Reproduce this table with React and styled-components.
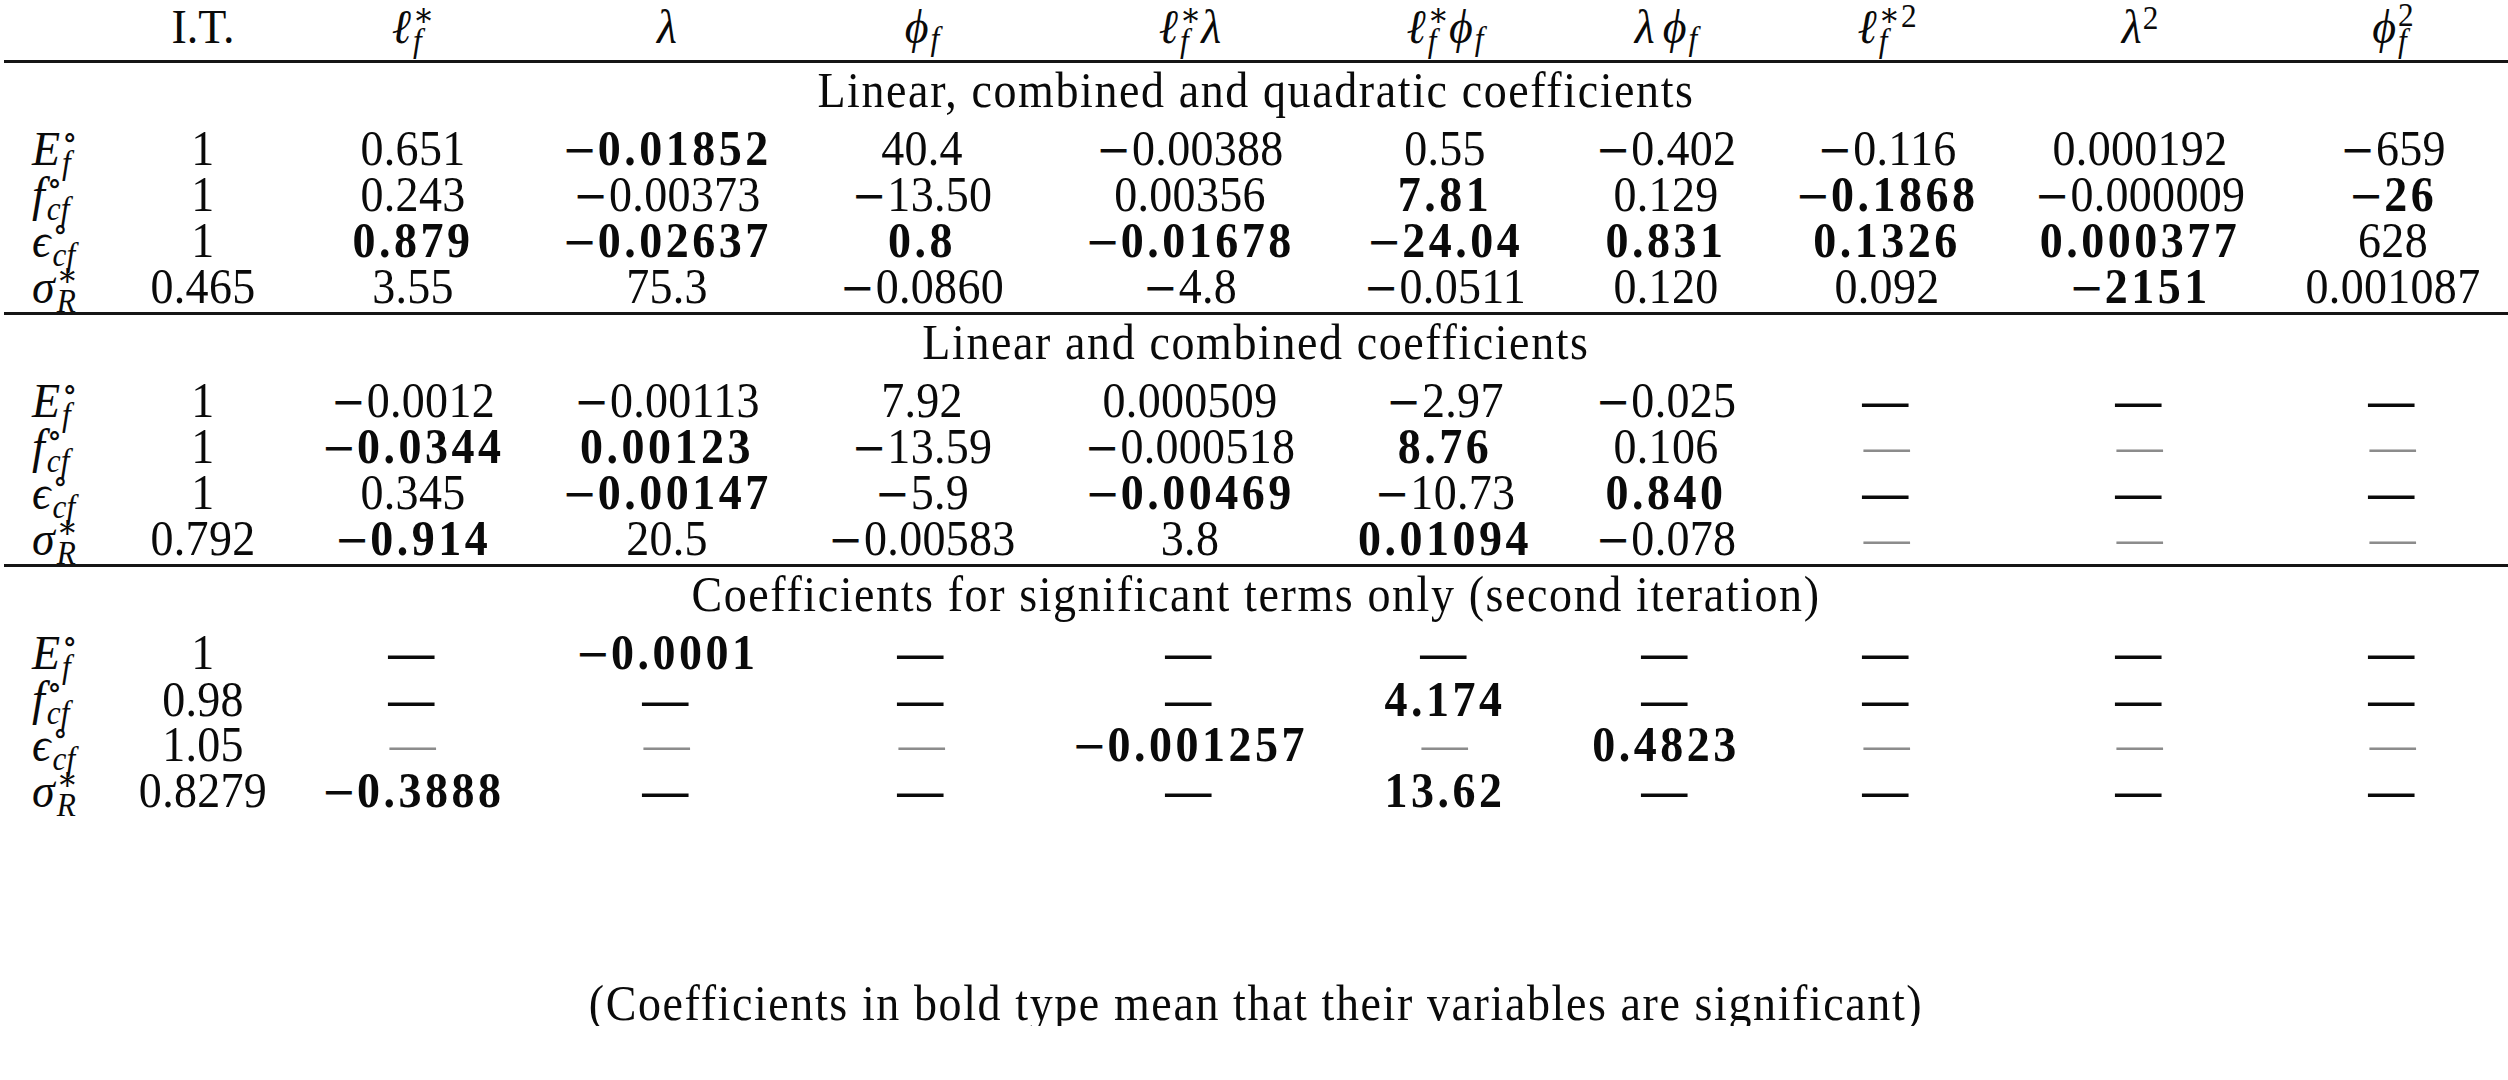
import React from "react";
import styled, { createGlobalStyle } from "styled-components";

const GlobalStyle = createGlobalStyle`
  html, body { margin: 0; padding: 0; background: #ffffff; }
  body { overflow: hidden; }
`;

const COLS = "116px 166px 254px 254px 256px 280px 230px 212px 230px 276px 230px";

const Page = styled.div`
  box-sizing: border-box;
  width: 2508px;
  padding-left: 4px;
  font-family: "Liberation Serif", "DejaVu Serif", serif;
  font-size: 46px;
  color: #0a0a0a;
`;

const Row = styled.div`
  display: grid;
  grid-template-columns: ${COLS};
  height: 46px;
  line-height: 46px;
  padding-top: ${(p) => p.$pt || 0}px;
`;

const Cell = styled.div`
  text-align: center;
  white-space: nowrap;
  transform: scaleY(1.1);
  letter-spacing: ${(p) => (p.$bold ? "3.5px" : "0.3px")};
  font-weight: ${(p) => (p.$bold ? 700 : 400)};
  color: ${(p) => (p.$faint ? "#8c8c8c" : "#0a0a0a")};
`;

const Minus = styled.span`
  font-family: "DejaVu Serif", serif;
  font-size: 0.9em;
  font-weight: 400;
  letter-spacing: 0;
  margin-right: 1px;
`;

const LabelCell = styled.div`
  text-align: left;
  padding-left: 28px;
  white-space: nowrap;
  transform: scaleY(1.05);
`;

const HeadCell = styled.div`
  text-align: center;
  white-space: nowrap;
  transform: scaleY(1.05);
`;

const Rule = styled.div`
  height: 3px;
  margin-top: ${(p) => p.$mt}px;
  background: #151515;
`;

const Title = styled.div`
  box-sizing: border-box;
  height: 63px;
  padding-top: 5px;
  line-height: 46px;
  text-align: center;
  letter-spacing: 1.6px;
  white-space: nowrap;
  transform: scaleY(1.1);
`;

const Footer = styled.div`
  margin-top: 166px;
  height: 46px;
  line-height: 46px;
  text-align: center;
  letter-spacing: 1.6px;
  white-space: nowrap;
  transform: scaleY(1.1);
`;

const Ital = styled.span`
  font-style: italic;
`;

const Scripts = styled.span`
  display: inline-flex;
  flex-direction: column;
  vertical-align: 16px;
  font-size: 0.68em;
  line-height: 0.8;
  margin: -16px 0 -16px 2px;
  text-align: left;
`;

const Sup = styled.span`
  font-style: ${(p) => (p.$roman ? "normal" : "italic")};
`;

const Sub = styled.span`
  font-style: italic;
`;

const Raise = styled.span`
  display: inline-block;
  font-size: 0.68em;
  vertical-align: ${(p) => p.$up}px;
  line-height: 1;
  margin: -12px 0 -12px 1px;
`;

const Gap = styled.span`
  display: inline-block;
  width: ${(p) => p.$w}px;
`;

function M({ base, sup, sub, roman }) {
  return (
    <>
      <Ital>{base}</Ital>
      <Scripts>
        <Sup $roman={roman}>{sup || ""}</Sup>
        <Sub>{sub || ""}</Sub>
      </Scripts>
    </>
  );
}

const ELL = "\u2113";
const AST = "\u2217";
const PHI = "\u03D5";
const LAM = "\u03BB";
const CIRC = "\u2218";

const headers = [
  <span>I.T.</span>,
  <M base={ELL} sup={AST} sub="f" />,
  <Ital>{LAM}</Ital>,
  <M base={PHI} sub="f" />,
  <>
    <M base={ELL} sup={AST} sub="f" />
    <Ital>{LAM}</Ital>
  </>,
  <>
    <M base={ELL} sup={AST} sub="f" />
    <M base={PHI} sub="f" />
  </>,
  <>
    <Ital>{LAM}</Ital>
    <Gap $w={8} />
    <M base={PHI} sub="f" />
  </>,
  <>
    <M base={ELL} sup={AST} sub="f" />
    <Raise $up={15}>2</Raise>
  </>,
  <>
    <Ital>{LAM}</Ital>
    <Raise $up={13}>2</Raise>
  </>,
  <M base={PHI} sup="2" sub="f" roman />,
];

const labels = [
  <M base="E" sup={CIRC} sub="f" roman />,
  <M base="f" sup={CIRC} sub="cf" roman />,
  <M base={"\u03F5"} sup={CIRC} sub="cf" roman />,
  <M base={"\u03C3"} sup={AST} sub="R" roman />,
];

// "*" prefix = bold, "—" thick dash, "~" thin (faint) dash
const sections = [
  {
    title: "Linear, combined and quadratic coefficients",
    rows: [
      ["1", "0.651", "*−0.01852", "40.4", "−0.00388", "0.55", "−0.402", "−0.116", "0.000192", "−659"],
      ["1", "0.243", "−0.00373", "−13.50", "0.00356", "*7.81", "0.129", "*−0.1868", "−0.000009", "*−26"],
      ["1", "*0.879", "*−0.02637", "*0.8", "*−0.01678", "*−24.04", "*0.831", "*0.1326", "*0.000377", "628"],
      ["0.465", "3.55", "75.3", "−0.0860", "−4.8", "−0.0511", "0.120", "0.092", "*−2151", "0.001087"],
    ],
  },
  {
    title: "Linear and combined coefficients",
    rows: [
      ["1", "−0.0012", "−0.00113", "7.92", "0.000509", "−2.97", "−0.025", "—", "—", "—"],
      ["1", "*−0.0344", "*0.00123", "−13.59", "−0.000518", "*8.76", "0.106", "~", "~", "~"],
      ["1", "0.345", "*−0.00147", "−5.9", "*−0.00469", "−10.73", "*0.840", "—", "—", "—"],
      ["0.792", "*−0.914", "20.5", "−0.00583", "3.8", "*0.01094", "−0.078", "~", "~", "~"],
    ],
  },
  {
    title: "Coefficients for significant terms only (second iteration)",
    rows: [
      ["1", "—", "*−0.0001", "—", "—", "—", "—", "—", "—", "—"],
      ["0.98", "—", "—", "—", "—", "*4.174", "—", "—", "—", "—"],
      ["1.05", "~", "~", "~", "*−0.001257", "~", "*0.4823", "~", "~", "~"],
      ["0.8279", "*−0.3888", "—", "—", "—", "*13.62", "—", "—", "—", "—"],
    ],
  },
];

function Num({ text }) {
  if (text.startsWith("−")) {
    return (
      <>
        <Minus>−</Minus>
        {text.slice(1)}
      </>
    );
  }
  return text;
}

function Value({ v }) {
  if (v === "—") return <Cell $bold>—</Cell>;
  if (v === "~") return <Cell $faint>—</Cell>;
  if (v.startsWith("*"))
    return (
      <Cell $bold>
        <Num text={v.slice(1)} />
      </Cell>
    );
  return (
    <Cell>
      <Num text={v} />
    </Cell>
  );
}

export default function App() {
  return (
    <>
      <GlobalStyle />
      <Page>
        <Row $pt={4}>
          <HeadCell />
          {headers.map((h, i) => (
            <HeadCell key={i}>{h}</HeadCell>
          ))}
        </Row>
        {sections.map((s, si) => (
          <React.Fragment key={si}>
            <Rule $mt={si === 0 ? 10 : 2} />
            <Title>{s.title}</Title>
            {s.rows.map((r, ri) => (
              <Row key={ri}>
                <LabelCell>{labels[ri]}</LabelCell>
                {r.map((v, ci) => (
                  <Value key={ci} v={v} />
                ))}
              </Row>
            ))}
          </React.Fragment>
        ))}
        <Footer>(Coefficients in bold type mean that their variables are significant)</Footer>
      </Page>
    </>
  );
}
